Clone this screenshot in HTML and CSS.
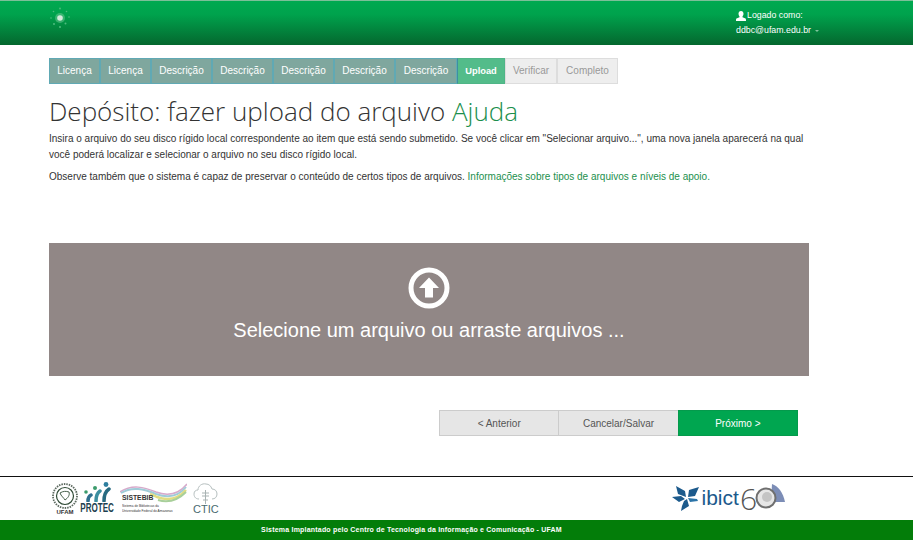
FILE: index.html
```html
<!DOCTYPE html>
<html lang="pt-BR">
<head>
  <meta charset="UTF-8">
  <title>Depósito: fazer upload do arquivo</title>
  <link rel="stylesheet" href="styles.css">
</head>
<body>
  <header class="topbar">
    <svg class="brand" width="22" height="22" viewBox="0 0 22 22">
      <circle cx="11" cy="11" r="5" fill="#7fd0a0" opacity="0.45"/>
      <circle cx="11" cy="11" r="2.800" fill="#d5eadc"/>
      <g fill="#4dbb7e">
        <circle cx="11" cy="1.500" r="0.900"/><circle cx="4.500" cy="4.500" r="0.800"/><circle cx="17.500" cy="4.500" r="0.800"/>
        <circle cx="2" cy="11" r="0.800"/><circle cx="20" cy="10" r="0.800"/><circle cx="5" cy="17" r="1"/>
        <circle cx="16.500" cy="16.500" r="1"/><circle cx="11" cy="20" r="1"/>
      </g>
    </svg>
    <div class="user">
      <div class="user-line user-name">
        <svg width="10" height="10" viewBox="0 0 10 10"><path d="M5 0c1.600 0 2.500 1.200 2.500 2.800 0 1-.4 2-1 2.600v.8l3 1.300c.4.200.5.500.5 2.500H0c0-2 .1-2.300.5-2.500l3-1.300v-.8c-.6-.6-1-1.600-1-2.600C2.500 1.200 3.400 0 5 0z" fill="#fff"/></svg>
        <span>Logado como:</span>
      </div>
      <div class="user-line">ddbc@ufam.edu.br<i class="caret"></i></div>
    </div>
  </header>

  <main class="content">
    <ol class="steps">
      <li class="step done">Licença</li>
      <li class="step done">Licença</li>
      <li class="step done">Descrição</li>
      <li class="step done">Descrição</li>
      <li class="step done">Descrição</li>
      <li class="step done">Descrição</li>
      <li class="step done">Descrição</li>
      <li class="step current">Upload</li>
      <li class="step todo">Verificar</li>
      <li class="step todo">Completo</li>
    </ol>

    <h1 class="title">Depósito: fazer upload do arquivo <a href="#">Ajuda</a></h1>
    <p class="intro">Insira o arquivo do seu disco rígido local correspondente ao item que está sendo submetido. Se você clicar em "Selecionar arquivo...", uma nova janela aparecerá na qual você poderá localizar e selecionar o arquivo no seu disco rígido local.</p>
    <p class="intro">Observe também que o sistema é capaz de preservar o conteúdo de certos tipos de arquivos. <a href="#">Informações sobre tipos de arquivos e níveis de apoio.</a></p>

    <div class="dropzone">
      <svg width="42" height="42" viewBox="0 0 42 42">
        <circle cx="21" cy="21" r="18" fill="none" stroke="#fff" stroke-width="5"/>
        <path d="M21 10.500 31 21h-6v9.500h-8V21h-6z" fill="#fff"/>
      </svg>
      <div class="dropzone-text">Selecione um arquivo ou arraste arquivos ...</div>
    </div>

    <div class="actions">
      <button class="btn">&lt; Anterior</button>
      <button class="btn">Cancelar/Salvar</button>
      <button class="btn primary">Próximo &gt;</button>
    </div>
  </main>

  <footer class="footer">
    <div class="logos">
      <div class="logos-left">
        <div class="logo ufam">
          <svg width="26" height="26" viewBox="0 0 26 26">
            <circle cx="13" cy="13" r="12" fill="none" stroke="#5d6a60" stroke-width="1.800" stroke-dasharray="1.500 1"/>
            <circle cx="13" cy="13" r="8.500" fill="none" stroke="#2f4a35" stroke-width="1.200"/>
            <path d="M8 10c3-2 6-2 9-1 1 3-1 6-4 8-1-2-4-4-5-7z" fill="none" stroke="#47604c" stroke-width="1"/>
          </svg>
          <span>UFAM</span>
        </div>
        <div class="logo protec">
          <svg width="33" height="20" viewBox="0 0 33 20">
            <g fill="none" stroke-width="3.500" stroke-linecap="round">
              <path d="M7 19c0-3 1-5 3-6" stroke="#2f6f8f"/>
              <path d="M15 19c0-5 1-8 4-10" stroke="#3b8ea0"/>
              <path d="M23 19c0-7 2-10 5-12" stroke="#276a80"/>
            </g>
            <circle cx="5" cy="10" r="1.800" fill="#3b9b6c"/>
            <circle cx="14" cy="6" r="2" fill="#3b9b6c"/>
            <circle cx="25" cy="2.500" r="2.400" fill="#2f7f9f"/>
          </svg>
          <span>PROTEC</span>
        </div>
        <div class="logo sistebib">
          <svg class="wave" width="67" height="26" viewBox="0 0 67 26">
            <path d="M0 9C12 1 24 4 36 9c11 4 22 3 31-8" fill="none" stroke="#d7aacb" stroke-width="1.500"/>
            <path d="M1 10C12 3 24 6 36 11c11 4 22 3 30-7" fill="none" stroke="#9fcbd8" stroke-width="2"/>
            <path d="M30 11c3 1 5 2 7 3 11 4 21 2 29-7" fill="none" stroke="#e0dc82" stroke-width="2.500"/>
            <path d="M38 17c10 3 20 0 28-8" fill="none" stroke="#a8cf9a" stroke-width="2"/>
          </svg>
          <strong>SISTEBIB</strong>
          <small>Sistema de Bibliotecas da<br>Universidade Federal do Amazonas</small>
        </div>
        <div class="logo ctic">
          <svg width="25" height="22" viewBox="0 0 25 22">
            <path d="M6 17C2 17 1 14 1 12c0-3 2-4 4-4 0-4 4-7 8-6 3 0 5 2 6 5 3 0 5 2 5 5s-2 5-5 5" fill="none" stroke="#b6bfbf" stroke-width="1"/>
            <path d="M12.500 8v14M9 11h7M9 14h7M10 18h5" fill="none" stroke="#a9b3b3" stroke-width="1"/>
          </svg>
          <span>CTIC</span>
        </div>
      </div>
      <div class="ibict">
        <svg width="28" height="26" viewBox="0 0 28 26">
          <path d="M4 1l9 5 1 6-8-3zM27 2l-4 9-7 1 1-7zM0 12l9-1 4 3-6 3zM12 16l3-2 2 7-8 5 1-5z" fill="#1c5a8c"/>
          <path d="M16 13l9 1 1 2-8 1z" fill="#2c74a8"/>
        </svg>
        <span class="ibict-name">ibict</span>
        <span class="ibict-num">6</span>
        <svg class="ibict-zero" width="32" height="30" viewBox="0 0 32 30">
          <path d="M17 1C23 3 28 9 30 19H16z" fill="#7c8db6"/>
          <circle cx="11" cy="15" r="9.500" fill="#e6e6e6" stroke="#6f6f6f" stroke-width="2"/>
          <circle cx="12" cy="14" r="5" fill="#c4c4c4"/>
        </svg>
      </div>
    </div>
    <div class="legal">Sistema Implantado pelo Centro de Tecnologia da Informação e Comunicação - UFAM</div>
  </footer>
</body>
</html>
```

FILE: styles.css
```css
body {
  font-family: "Liberation Sans", Arial, sans-serif;
  font-size: 10px;
  color: #333;
  background-color: #fff;
  margin: 0;
}
a {
  color: #1b8f4d;
  text-decoration: none;
}
.topbar {
  height: 44px;
  border-top: 1px solid #7cbf98;
  display: flex;
  justify-content: space-between;
  padding: 0 91px 0 49px;
  background: linear-gradient(to bottom, #00a950, #00a34d 30%, #04672e);
}
.brand {
  margin-top: 6px;
}
.user {
  width: 86px;
  padding-top: 7px;
  color: #fff;
  font-size: 8.800px;
}
.user-line {
  height: 15px;
  line-height: 15px;
  white-space: nowrap;
}
.user-name {
  display: flex;
  align-items: center;
  gap: 1px;
}
.caret {
  display: inline-block;
  margin-left: 4px;
  vertical-align: 1px;
  border-top: 2px solid #7fc49c;
  border-left: 2px solid transparent;
  border-right: 2px solid transparent;
}
.content {
  width: 760px;
  margin-left: 49px;
  padding-top: 13px;
}
.steps {
  display: grid;
  grid-template-columns: 51px 51px repeat(4, 61px) 62px 48px 52px 61px;
  list-style: none;
  margin: 0;
  padding: 0;
  height: 26px;
}
.step {
  text-align: center;
  line-height: 24px;
  white-space: nowrap;
  border: 1px solid;
}
.step.done {
  color: #fff;
  background-color: #7fa79e;
  border-color: #60a9b4;
}
.step.current {
  color: #fff;
  font-size: 9.300px;
  font-weight: bold;
  background-color: #53bc8a;
  border-color: #4fb587;
  border-left-color: #3f8f9f;
}
.step.todo {
  color: #999;
  background-color: #eee;
  border-color: #ddd;
}
.title {
  font-family: "Open Sans", sans-serif;
  font-weight: 300;
  font-size: 26px;
  line-height: 34px;
  color: #333;
  margin: 10px 0 3px;
  white-space: nowrap;
}
.intro {
  line-height: 16px;
  margin: 0 0 6px;
}
.dropzone {
  height: 133px;
  margin-top: 58px;
  background-color: #918786;
  color: #fff;
  display: flex;
  flex-direction: column;
  align-items: center;
  padding-top: 24px;
  box-sizing: border-box;
}
.dropzone-text {
  font-size: 20px;
  line-height: 24px;
  margin-top: 9px;
}
.actions {
  display: flex;
  justify-content: flex-end;
  margin: 34px 11px 0 0;
}
.btn {
  width: 120.330px;
  height: 26px;
  font-family: inherit;
  font-size: 10px;
  color: #555;
  background-color: #e6e6e6;
  border: 1px solid #ccc;
  margin-left: -1px;
  padding: 0;
}
.btn.primary {
  color: #fff;
  background-color: #00a650;
  border-color: #049a4c;
}
.footer {
  margin-top: 40px;
  border-top: 1px solid #111;
}
.logos {
  height: 43px;
  display: flex;
  justify-content: space-between;
  padding: 0 126px 0 52px;
}
.logos-left {
  display: flex;
  align-items: flex-start;
}
.logo {
  display: flex;
  flex-direction: column;
  align-items: center;
  padding-top: 6px;
}
.ufam span {
  font-size: 6px;
  font-weight: bold;
  line-height: 7px;
  color: #333;
}
.protec {
  width: 33px;
  margin-left: 3px;
  padding-top: 5px;
}
.protec span {
  font-size: 13px;
  font-weight: bold;
  line-height: 11px;
  color: #1d3f4f;
  transform: scaleX(0.62);
}
.sistebib {
  position: relative;
  width: 67px;
  margin-left: 6px;
  align-items: flex-start;
  padding: 15px 0 0 2px;
  box-sizing: border-box;
  color: #333;
}
.wave {
  position: absolute;
  top: 6px;
  left: 0;
}
.sistebib strong {
  position: relative;
  font-size: 8px;
  line-height: 11px;
  transform: scaleX(0.85);
  transform-origin: left;
}
.sistebib small {
  font-size: 4px;
  line-height: 5px;
  white-space: nowrap;
  transform: scaleX(0.8);
  transform-origin: left;
}
.ctic {
  margin-left: 6px;
  padding-top: 5px;
}
.ctic span {
  font-size: 11px;
  line-height: 11px;
  color: #4a6a70;
}
.ibict {
  display: flex;
  align-items: center;
  margin-top: -1px;
}
.ibict-name {
  font-size: 21px;
  margin-left: 2px;
  color: #1c5a8c;
}
.ibict-num {
  font-family: "Open Sans", sans-serif;
  font-weight: 300;
  font-size: 30px;
  margin-left: 1px;
  color: #555;
}
.ibict-zero {
  margin-left: -2px;
}
.legal {
  height: 20px;
  line-height: 20px;
  background-color: #037d09;
  color: #fff;
  font-size: 7px;
  font-weight: bold;
  text-align: center;
  letter-spacing: 0.200px;
  padding-right: 90px;
}
```
